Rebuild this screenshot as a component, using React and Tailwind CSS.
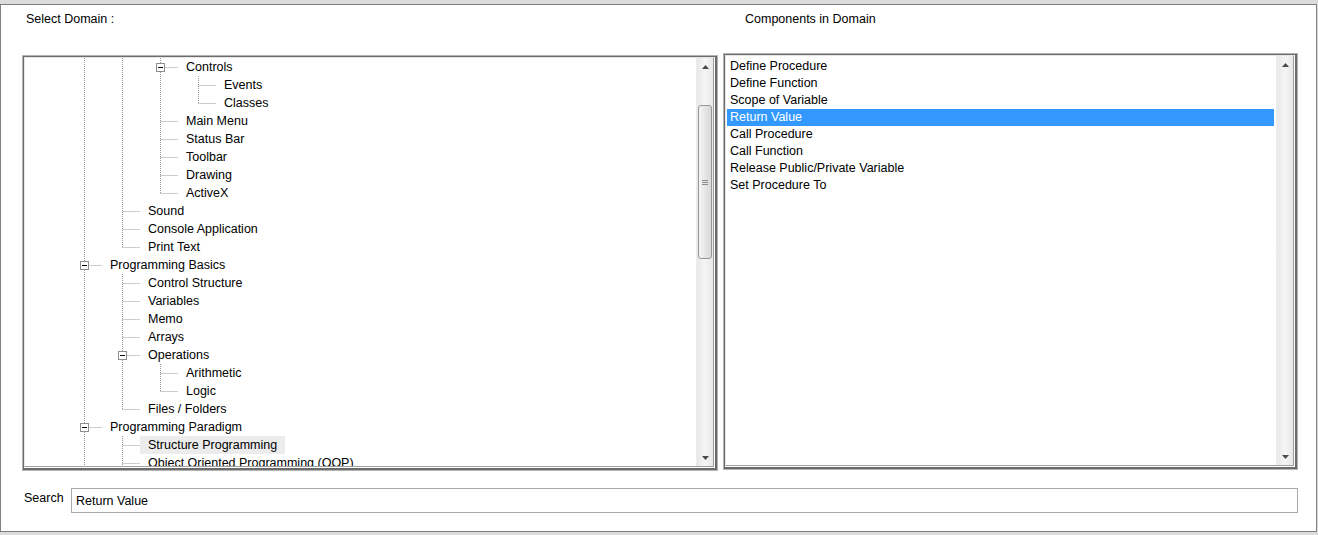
import React from "react";

// tree rows: [depth, label, hasBox, selected]
const TREE = [
  [3, "Controls", true],
  [4, "Events"],
  [4, "Classes"],
  [3, "Main Menu"],
  [3, "Status Bar"],
  [3, "Toolbar"],
  [3, "Drawing"],
  [3, "ActiveX"],
  [2, "Sound"],
  [2, "Console Application"],
  [2, "Print Text"],
  [1, "Programming Basics", true],
  [2, "Control Structure"],
  [2, "Variables"],
  [2, "Memo"],
  [2, "Arrays"],
  [2, "Operations", true],
  [3, "Arithmetic"],
  [3, "Logic"],
  [2, "Files / Folders"],
  [1, "Programming Paradigm", true],
  [2, "Structure Programming", false, true],
  [2, "Object Oriented Programming (OOP)"],
];

const ITEMS = [
  "Define Procedure",
  "Define Function",
  "Scope of Variable",
  "Return Value",
  "Call Procedure",
  "Call Function",
  "Release Public/Private Variable",
  "Set Procedure To",
];

// does the branch at `depth` go on below row i
function continues(i, depth) {
  for (let j = i + 1; j < TREE.length; j++) {
    const d = TREE[j][0];
    if (d < depth) return false;
    if (d === depth) return true;
  }
  return true;
}

function TreeRow({ i }) {
  const [d, label, box, sel] = TREE[i];
  const w = 37 + 38 * d;
  const cx = (c) => 19 + 38 * c + 0.5;
  const x = cx(d);
  const guides = [];
  for (let c = 1; c < d; c++) {
    if (continues(i, c)) guides.push(<line key={c} x1={cx(c)} y1={0} x2={cx(c)} y2={18} />);
  }
  return (
    <div className="flex h-[18px] items-center">
      <svg width={w} height={18} className="shrink-0">
        <g stroke="#9a9a9a" strokeDasharray="1 1">
          {guides}
          <line x1={x} y1={0} x2={x} y2={continues(i, d) ? 18 : 10} />
          <line x1={x} y1={9.5} x2={w} y2={9.5} />
        </g>
        {box && (
          <g>
            <rect x={x - 4} y={5.5} width={8} height={8} fill="#fff" stroke="#8f8f8f" />
            <line x1={x - 2.5} y1={9.5} x2={x + 2.5} y2={9.5} stroke="#000" />
          </g>
        )}
      </svg>
      <span className={`px-2 leading-[18px] whitespace-nowrap ${sel ? "bg-[#ececec]" : ""}`}>{label}</span>
    </div>
  );
}

function Arrow({ up }) {
  return (
    <svg width="7" height="4" viewBox="0 0 7 4">
      <path d={up ? "M0 4 L3.5 0 L7 4Z" : "M0 0 L3.5 4 L7 0Z"} fill="#4a4a4a" />
    </svg>
  );
}

function ScrollBar({ thumb }) {
  return (
    <div className="w-[17px] shrink-0 flex flex-col bg-linear-to-r from-[#e8e8e8] via-[#f5f5f5] to-[#e8e8e8] border-l border-[#ececec]">
      <div className="h-[17px] flex items-center justify-center"><Arrow up /></div>
      <div className="flex-1">
        {thumb && (
          <div className="mt-[30px] h-[154px] mx-px rounded-[3px] border border-[#979797] bg-linear-to-r from-[#f4f4f4] to-[#d9d9d9] flex flex-col items-center justify-center gap-px">
            <div className="w-[6px] h-px bg-[#8a8a8a]" />
            <div className="w-[6px] h-px bg-[#8a8a8a]" />
            <div className="w-[6px] h-px bg-[#8a8a8a]" />
          </div>
        )}
      </div>
      <div className="h-[17px] flex items-center justify-center"><Arrow /></div>
    </div>
  );
}

// sunken group frame round a list box
function Frame({ className, children }) {
  return (
    <div className={`border border-[#b4b4b4] ${className}`}>
      <div className="h-full border-t border-l border-b-2 border-r-2 border-[#6b6b6b] pb-px pr-px bg-white">
        <div className="h-full flex border-t border-l border-t-[#e6e6e6] border-l-[#e6e6e6] border-b border-r border-b-[#a0a0a0] border-r-[#a0a0a0] bg-white">
          {children}
        </div>
      </div>
    </div>
  );
}

export default function App() {
  return (
    <div className="w-[1318px] h-[535px] bg-[#dcdcdc] pt-[4px] font-['Liberation_Sans',Arial,sans-serif] text-[12.5px] text-black">
      <div className="w-[1317px] h-[528px] bg-white border border-[#808080] pl-[21px]">
        <div className="flex gap-[5px]">
          {/* left: domain tree */}
          <div className="w-[696px]">
            <div className="h-[48px] pt-[7px] pl-[4px] leading-[15px]">Select Domain :</div>
            <Frame className="mt-[2px] h-[416px]">
              <div className="flex-1 overflow-hidden pl-[2px]">
                {TREE.map((_, i) => <TreeRow key={i} i={i} />)}
              </div>
              <ScrollBar thumb />
            </Frame>
          </div>

          {/* right: components */}
          <div className="w-[575px]">
            <div className="h-[48px] pt-[7px] pl-[22px] leading-[15px]">Components in Domain</div>
            <Frame className="h-[417px]">
              <div className="flex-1 pt-[2px] pl-px mr-[2px]">
                {ITEMS.map((it) => (
                  <div
                    key={it}
                    className={`h-[17px] leading-[17px] px-[3px] whitespace-nowrap ${it === "Return Value" ? "bg-[#3399ff] text-white" : ""}`}
                  >
                    {it}
                  </div>
                ))}
              </div>
              <ScrollBar />
            </Frame>
          </div>
        </div>

        {/* search */}
        <div className="mt-[17px] flex items-start">
          <div className="w-[49px] pl-[2px] pt-[3px] leading-[15px]">Search</div>
          <div className="w-[1227px] h-[25px] border border-[#a9a9a9] pl-[4px] pt-px flex items-center">Return Value</div>
        </div>
      </div>
    </div>
  );
}
